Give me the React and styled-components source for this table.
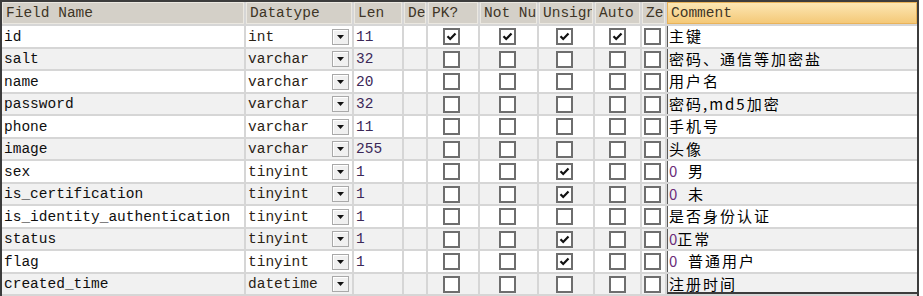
import React from 'react';
import styled, { createGlobalStyle } from 'styled-components';

const COLUMNS = '242px 106px 48px 22px 50px 57px 54px 45px 23px 250px';

const fields = [
  { name: 'id', type: 'int', len: '11', pk: true, nn: true, un: true, ai: true, comment: '主键' },
  { name: 'salt', type: 'varchar', len: '32', comment: '密码、通信等加密盐' },
  { name: 'name', type: 'varchar', len: '20', comment: '用户名' },
  { name: 'password', type: 'varchar', len: '32', comment: '密码,md5加密' },
  { name: 'phone', type: 'varchar', len: '11', comment: '手机号' },
  { name: 'image', type: 'varchar', len: '255', comment: '头像' },
  { name: 'sex', type: 'tinyint', len: '1', un: true, num: '0', comment: '  男' },
  { name: 'is_certification', type: 'tinyint', len: '1', un: true, num: '0', comment: '  未' },
  { name: 'is_identity_authentication', type: 'tinyint', len: '1', comment: '是否身份认证' },
  { name: 'status', type: 'tinyint', len: '1', un: true, num: '0', comment: '正常' },
  { name: 'flag', type: 'tinyint', len: '1', un: true, num: '0', comment: '  普通用户' },
  { name: 'created_time', type: 'datetime', len: '', comment: '注册时间' },
];

const headers = ['Field Name', 'Datatype', 'Len', 'Default', 'PK?', 'Not Null?', 'Unsigned', 'Auto Incr', 'Zerofill', 'Comment'];

const GlobalStyle = createGlobalStyle`
  body {
    margin: 0;
    background: #ffffff;
  }
`;

const Frame = styled.div`
  width: 915px;
  height: 294px;
  overflow: hidden;
  border-top: 2px solid #3c3c3c;
  border-left: 2px solid #3c3c3c;
  border-right: 2px solid #3c3c3c;
  background: #d6d6d6;
  display: flex;
  flex-direction: column;
  gap: 2px;
`;

const Row = styled.div`
  display: grid;
  grid-template-columns: ${COLUMNS};
  column-gap: 2px;
  height: ${(p) => p.$height}px;
  flex-shrink: 0;
`;

const HeadCell = styled.div`
  display: flex;
  align-items: center;
  padding: 0 3px;
  background: ${(p) => (p.$active ? 'linear-gradient(#fce7b4, #f4c978)' : '#d4d0c8')};
  border: 1px solid ${(p) => (p.$active ? '#e9b35a' : '#ebe8e1')};
  font-family: 'Liberation Mono', 'DejaVu Sans Mono', monospace;
  font-size: 14.5px;
  color: #3e3526;
  white-space: nowrap;
  overflow: hidden;
  text-overflow: clip;
`;

const Cell = styled.div`
  display: flex;
  align-items: center;
  justify-content: ${(p) => p.$justify || 'flex-start'};
  padding: 0 ${(p) => p.$padRight ?? 2}px 0 2px;
  background: ${(p) => (p.$alt ? '#f1f1f1' : '#ffffff')};
  font-family: 'Liberation Mono', 'DejaVu Sans Mono', monospace;
  font-size: 14.5px;
  color: ${(p) => p.$color || '#0e0e0e'};
  white-space: nowrap;
  overflow: hidden;
`;

const CommentCell = styled(Cell)`
  font-family: 'Noto Sans CJK SC', 'Noto Sans', sans-serif;
  font-size: 15px;
  line-height: 1;
  letter-spacing: 2px;
  color: #000000;
  border-left: 1px solid #5a5a5a;
  border-bottom: ${(p) => (p.$last ? '2px solid #3c3c3c' : 'none')};
  padding-left: 1px;
  padding-bottom: ${(p) => (p.$last ? 0 : 2)}px;
  white-space: pre;
`;

const Num = styled.span`
  color: #6b2c78;
  letter-spacing: 0;
`;

const DropButton = styled.span`
  width: 15px;
  height: 14px;
  flex-shrink: 0;
  margin-right: 1px;
  display: flex;
  align-items: center;
  justify-content: center;
  background: #f0f0f0;
  border: 1px solid #a9a9a9;
  box-shadow: inset 1px 1px 0 #ffffff;
`;

const Box = styled.span`
  width: 13px;
  height: 13px;
  flex-shrink: 0;
  display: flex;
  align-items: center;
  justify-content: center;
  background: #ffffff;
  border: 2px solid #6e6e6e;
`;

const Arrow = () => (
  <svg width="7" height="4" viewBox="0 0 7 4">
    <path d="M0 0 H7 L3.5 4 Z" fill="#111" />
  </svg>
);

const Check = ({ on }) => (
  <Box>
    {on && (
      <svg width="11" height="11" viewBox="0 0 11 11">
        <path d="M1.5 5.2 L4.2 8 L9.5 2.5" fill="none" stroke="#111" strokeWidth="2.2" />
      </svg>
    )}
  </Box>
);

export default function App() {
  return (
    <>
      <GlobalStyle />
      <Frame>
        <Row $height={22}>
          {headers.map((h) => (
            <HeadCell key={h} $active={h === 'Comment'}>
              {h}
            </HeadCell>
          ))}
        </Row>
        {fields.map((f, i) => {
          const alt = i % 2 === 1;
          return (
            <Row key={f.name} $height={alt ? 20 : 21}>
              <Cell $alt={alt}>{f.name}</Cell>
              <Cell $alt={alt} $justify="space-between" $color="#2a2214">
                {f.type}
                <DropButton>
                  <Arrow />
                </DropButton>
              </Cell>
              <Cell $alt={alt} $color="#3b2858">{f.len}</Cell>
              <Cell $alt={alt} />
              <Cell $alt={alt} $justify="center" $padRight={5}>
                <Check on={f.pk} />
              </Cell>
              <Cell $alt={alt} $justify="center" $padRight={5}>
                <Check on={f.nn} />
              </Cell>
              <Cell $alt={alt} $justify="center" $padRight={5}>
                <Check on={f.un} />
              </Cell>
              <Cell $alt={alt} $justify="center" $padRight={3}>
                <Check on={f.ai} />
              </Cell>
              <Cell $alt={alt} $justify="flex-start" $padRight={0}>
                <Check on={false} />
              </Cell>
              <CommentCell $alt={alt} $last={i === fields.length - 1}>
                {f.num && <Num>{f.num}</Num>}
                {f.comment}
              </CommentCell>
            </Row>
          );
        })}
      </Frame>
    </>
  );
}
